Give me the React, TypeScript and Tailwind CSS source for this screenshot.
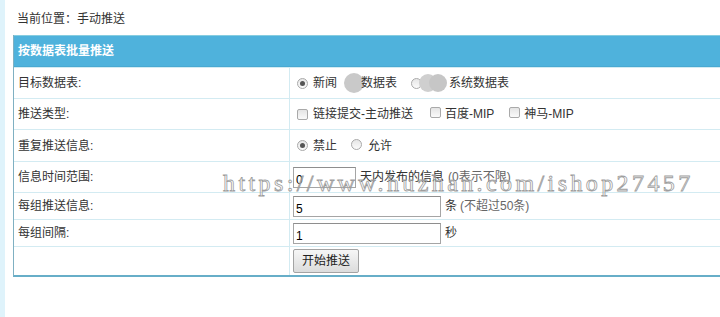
import type { ReactNode } from 'react'

const font = 'font-["Liberation_Sans","Noto_Sans_CJK_SC",sans-serif]'

function Radio({ checked }: { checked?: boolean }) {
  return (
    <span className="inline-flex w-[11px] h-[11px] rounded-full border border-[#a9a9a9] bg-gradient-to-b from-[#e6e6e6] to-[#fbfbfb] items-center justify-center shrink-0">
      {checked && <span className="w-[5px] h-[5px] rounded-full bg-[#555]" />}
    </span>
  )
}

function Check() {
  return (
    <span className="inline-block w-[11px] h-[11px] rounded-[2px] border border-[#a9a9a9] bg-gradient-to-b from-[#e4e4e4] to-[#fafafa] shrink-0" />
  )
}

function Row({ label, h, children }: { label?: string; h: string; children?: ReactNode }) {
  return (
    <div className={`flex border-t border-[#d3ebf2] ${h}`}>
      <div className="w-[276px] shrink-0 border-r border-[#d3ebf2] flex items-center pl-[4px]">{label}</div>
      <div className="flex-1 flex items-center pl-[3px]">{children}</div>
    </div>
  )
}

function Input({ value, w }: { value: string; w: string }) {
  return (
    <div className={`${w} h-[21px] border border-[#a5a5a5] border-t-[#8e8e8e] bg-white flex items-end pl-[2px] pb-[1px] text-[12px] leading-none text-black`}>
      {value}
    </div>
  )
}

export default function App() {
  return (
    <div className={`relative w-[720px] h-[317px] overflow-hidden bg-white flex text-[12px] text-[#333] ${font}`}>
      <div className="w-[5px] shrink-0 bg-[#dff3fb]" />
      <div className="flex-1 pl-[8px]">
        <div className="h-[35px] pl-[4px] pt-[13px] leading-none">当前位置：手动推送</div>
        <div className="w-[760px] border-l border-[#7fb0c2] border-b-2 border-b-[#67aec8]">
          <div className="h-[32px] border-t border-[#86cde0] bg-[#4fb2dc] border-b border-b-[#49a9d2] flex items-center pl-[4px] text-white font-bold">
            按数据表批量推送
          </div>
          <Row label="目标数据表:" h="h-[31px]">
            <div className="flex items-center pl-[4px]">
              <Radio checked />
              <span className="ml-[5px]">新闻</span>
              <span className="w-[20px] h-[20px] rounded-full bg-[#c9c9c9] ml-[7px] -mr-[3px]" />
              <span>数据表</span>
              <span className="relative ml-[14px] flex items-center">
                <Radio />
                <span className="w-[18px] h-[18px] rounded-full bg-[#cfcfcf] -ml-[3px]" />
                <span className="w-[18px] h-[18px] rounded-full bg-[#c6c6c6] -ml-[8px]" />
              </span>
              <span className="ml-[2px]">系统数据表</span>
            </div>
          </Row>
          <Row label="推送类型:" h="h-[31px]">
            <div className="flex items-center pl-[4px]">
              <Check />
              <span className="ml-[5px]">链接提交-主动推送</span>
              <span className="ml-[17px]"><Check /></span>
              <span className="ml-[4px]">百度-MIP</span>
              <span className="ml-[15px]"><Check /></span>
              <span className="ml-[4px]">神马-MIP</span>
            </div>
          </Row>
          <Row label="重复推送信息:" h="h-[32px]">
            <div className="flex items-center pl-[4px]">
              <Radio checked />
              <span className="ml-[5px]">禁止</span>
              <span className="ml-[14px]"><Radio /></span>
              <span className="ml-[6px]">允许</span>
            </div>
          </Row>
          <Row label="信息时间范围:" h="h-[31px]">
            <Input value="0" w="w-[63px]" />
            <span className="ml-[4px]">天内发布的信息</span>
            <span className="ml-[4px] text-[#666]">(0表示不限)</span>
          </Row>
          <Row label="每组推送信息:" h="h-[27px]">
            <Input value="5" w="w-[148px]" />
            <span className="ml-[4px]">条</span>
            <span className="ml-[3px] text-[#666]">(不超过50条)</span>
          </Row>
          <Row label="每组间隔:" h="h-[27px]">
            <Input value="1" w="w-[148px]" />
            <span className="ml-[4px]">秒</span>
          </Row>
          <Row h="h-[29px]">
            <button className="h-[24px] px-[8px] border border-[#a3a3a3] rounded-[2px] bg-gradient-to-b from-[#f6f6f6] to-[#dcdcdc] text-[12px] text-[#222] leading-none">
              开始推送
            </button>
          </Row>
        </div>
      </div>
      <div className='absolute left-[223px] top-[171px] text-[24px] leading-none tracking-[3.4px] whitespace-nowrap text-white/10 font-["Liberation_Serif",serif] [-webkit-text-stroke:0.8px_#9d9d9d] pointer-events-none'>
        https://www.huzhan.com/ishop27457
      </div>
    </div>
  )
}
